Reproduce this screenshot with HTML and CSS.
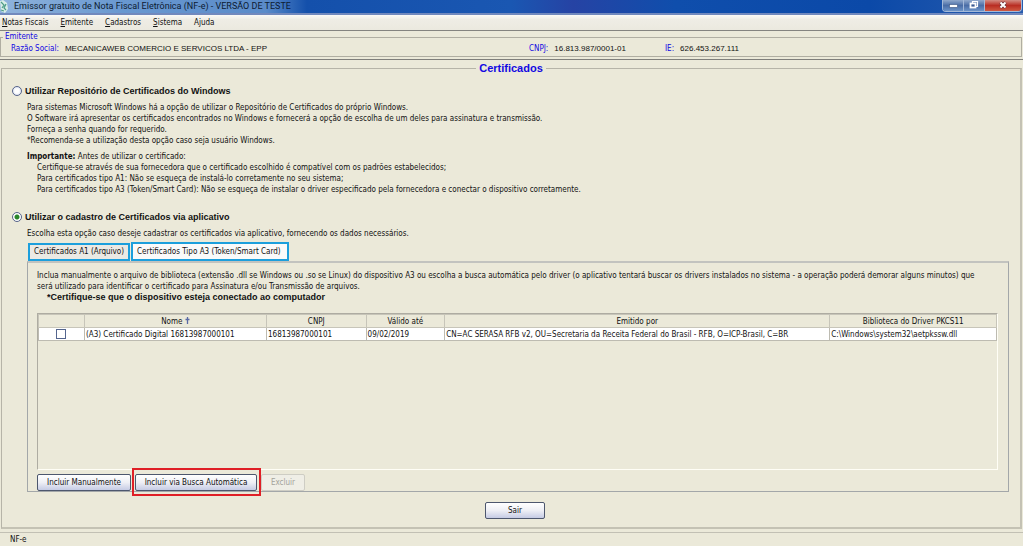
FILE: index.html
```html
<!DOCTYPE html>
<html lang="pt-BR">
<head>
<meta charset="utf-8">
<title>Emissor gratuito de Nota Fiscal Eletrônica (NF-e)</title>
<link rel="stylesheet" href="styles.css">
</head>
<body>
<header class="titlebar">
  <svg class="app-icon" viewBox="0 0 10 13" aria-hidden="true">
    <path d="M0 1l3-1 4 3 1 6-3 4-4-2z" fill="#d9eee8"/>
    <path d="M1 2l3 3-2 3M6 4L4 8l2 2M1 10l3 1" fill="none" stroke="#4d9c86" stroke-width="1.2"/>
  </svg>
  <span class="title">Emissor gratuito de Nota Fiscal Eletrônica (NF-e) - VERSÃO DE TESTE</span>
  <div class="window-buttons">
    <button class="win min" aria-label="Minimizar"><svg viewBox="0 0 20 10"><rect x="6.500" y="3.500" width="8" height="3" fill="#fff" stroke="#46608c" stroke-width=".7"/></svg></button>
    <button class="win max" aria-label="Restaurar"><svg viewBox="0 0 20 10"><path d="M8.500 2V.5h5v5H12" fill="none" stroke="#fff" stroke-width="1.200"/><rect x="6.500" y="2.500" width="5" height="4" fill="#3c5c94" stroke="#fff" stroke-width="1.800"/></svg></button>
    <button class="win close" aria-label="Fechar"><svg viewBox="0 0 36 10"><path d="M15.500 1.500l5 5M20.500 1.500l-5 5" stroke="#673038" stroke-width="3.400"/><path d="M15.500 1.500l5 5M20.500 1.500l-5 5" stroke="#fff" stroke-width="2"/></svg></button>
  </div>
</header>
<nav class="menubar">
  <button><u>N</u>otas Fiscais</button>
  <button><u>E</u>mitente</button>
  <button><u>C</u>adastros</button>
  <button><u>S</u>istema</button>
  <button>A<u>j</u>uda</button>
</nav>
<section class="issuer-bar">
  <fieldset class="issuer">
    <legend>Emitente</legend>
    <dl>
      <div class="company"><dt>Razão Social:</dt><dd>MECANICAWEB COMERCIO E SERVICOS LTDA - EPP</dd></div>
      <div class="cnpj"><dt>CNPJ:</dt><dd>16.813.987/0001-01</dd></div>
      <div class="ie"><dt>IE:</dt><dd>626.453.267.111</dd></div>
    </dl>
  </fieldset>
</section>
<main class="content">
  <fieldset class="certificates">
    <legend>Certificados</legend>
    <div class="option">
      <input type="radio" name="modo" id="repo"><label for="repo">Utilizar Repositório de Certificados do Windows</label>
    </div>
    <div class="help">
      <p>Para sistemas Microsoft Windows há a opção de utilizar o Repositório de Certificados do próprio Windows.<br>
      O Software irá apresentar os certificados encontrados no Windows e fornecerá a opção de escolha de um deles para assinatura e transmissão.<br>
      Forneça a senha quando for requerido.<br>
      *Recomenda-se a utilização desta opção caso seja usuário Windows.</p>
      <p><b>Importante:</b> Antes de utilizar o certificado:</p>
      <ul>
        <li>Certifique-se através de sua fornecedora que o certificado escolhido é compatível com os padrões estabelecidos;</li>
        <li>Para certificados tipo A1: Não se esqueça de instalá-lo corretamente no seu sistema;</li>
        <li>Para certificados tipo A3 (Token/Smart Card): Não se esqueça de instalar o driver especificado pela fornecedora e conectar o dispositivo corretamente.</li>
      </ul>
    </div>
    <div class="option">
      <input type="radio" name="modo" id="app" checked><label for="app">Utilizar o cadastro de Certificados via aplicativo</label>
    </div>
    <p class="app-help">Escolha esta opção caso deseje cadastrar os certificados via aplicativo, fornecendo os dados necessários.</p>
    <div class="tabs" role="tablist">
      <button class="tab" role="tab" aria-selected="false">Certificados A1 (Arquivo)</button>
      <button class="tab active" role="tab" aria-selected="true">Certificados Tipo A3 (Token/Smart Card)</button>
    </div>
    <section class="panel" role="tabpanel">
      <p class="intro">Inclua manualmente o arquivo de biblioteca (extensão .dll se Windows ou .so se Linux) do dispositivo A3 ou escolha a busca automática pelo driver (o aplicativo tentará buscar os drivers instalados no sistema - a operação poderá demorar alguns minutos) que<br>será utilizado para identificar o certificado para Assinatura e/ou Transmissão de arquivos.</p>
      <p class="notice">*Certifique-se que o dispositivo esteja conectado ao computador</p>
      <div class="table-box">
        <table>
          <colgroup><col class="c-check"><col class="c-name"><col class="c-cnpj"><col class="c-valid"><col class="c-issuer"><col class="c-lib"></colgroup>
          <thead><tr><th></th><th>Nome <svg class="sort" viewBox="0 0 5 7" aria-hidden="true"><path d="M2.500 0v7M.5 2.500h4" stroke="#5969a5" stroke-width="1.300"/></svg></th><th>CNPJ</th><th>Válido até</th><th>Emitido por</th><th>Biblioteca do Driver PKCS11</th></tr></thead>
          <tbody><tr><td class="check"><input type="checkbox" aria-label="Selecionar certificado"></td><td>(A3) Certificado Digital 16813987000101</td><td>16813987000101</td><td>09/02/2019</td><td>CN=AC SERASA RFB v2, OU=Secretaria da Receita Federal do Brasil - RFB, O=ICP-Brasil, C=BR</td><td>C:\Windows\system32\aetpkssw.dll</td></tr></tbody>
        </table>
      </div>
      <div class="actions">
        <button class="btn manual">Incluir Manualmente</button>
        <div class="marked"><button class="btn auto">Incluir via Busca Automática</button></div>
        <button class="btn remove" disabled>Excluir</button>
      </div>
    </section>
    <div class="exit"><button class="btn">Sair</button></div>
  </fieldset>
</main>
<footer class="status">NF-e</footer>
</body>
</html>
```
FILE: styles.css
```css
* { box-sizing: border-box; }
body {
  margin: 0;
  min-height: 100vh;
  display: flex;
  flex-direction: column;
  background: #ebe9d9;
  color: #111;
  font: 8px/11px "DejaVu Sans Condensed", "Liberation Sans", sans-serif;
}
button { font: inherit; color: inherit; margin: 0; padding: 0; border: 0; background: none; white-space: nowrap; }
p, dl, dd, ul { margin: 0; padding: 0; }
fieldset { min-width: 0; margin: 0; padding: 0; }

.titlebar {
  display: flex;
  height: 15px;
  border-bottom: 2px solid #7189bd;
  background: linear-gradient(90deg, #8fb3dc 0, #6998d0 12%, #5a8bc9 26%, #1450ab 30%, #1a57b2 50%, #2643a4 56%, #0f4eac 66%, #0b49a8 85%, #285cae 100%);
}
.app-icon { width: 10px; height: 13px; margin-right: 4px; }
.title { flex: 1; font: 9px/13px Roboto, sans-serif; color: #0d1b32; white-space: nowrap; }
.window-buttons { display: flex; height: 12px; margin-right: 1px; border: 1px solid #a4b9d8; border-top: 0; border-radius: 0 0 4px 4px; overflow: hidden; }
.win { height: 11px; background: linear-gradient(#91a9cc, #4a6da6 50%, #6d94c8); border-right: 1px solid #a4b9d8; }
.win svg { display: block; width: 100%; height: 10px; }
.min, .max { width: 21px; }
.close { width: 36px; border: 0; background: linear-gradient(#d38c82, #b92e23 50%, #cf5a42); }

.menubar {
  display: flex;
  gap: 12px;
  height: 16px;
  padding-left: 2px;
  border-bottom: 1px solid #848480;
  background: linear-gradient(#fafaf7, #efede5 30%, #ebe9df);
}
u { text-underline-offset: 1px; }

.issuer-bar { padding: 1px 1px 2px 0; border-bottom: 1px solid #7f7f7b; }
.issuer { height: 25px; border: 1px solid #b0aea2; }
.issuer legend { margin-left: 2px; padding: 0 2px; line-height: 10px; color: #1208e2; }
.issuer dl { display: grid; grid-template-columns: 518fr 136fr 348fr; padding: 2px 8px 0 10px; }
.issuer dl div { display: flex; gap: 6px; line-height: 10px; }
dt { color: #1208e2; }
dd { font-family: "Liberation Sans", Arial, sans-serif; }

.content { flex: 1; display: flex; padding: 2px 1px 3px; }
.certificates { flex: 1; border: 1px solid #b6b4a8; border-right: 2px solid #c4c2b4; border-bottom: 2px solid #c4c2b4; }
.certificates > legend, .option, .notice { font-family: "Liberation Sans", Arial, sans-serif; font-weight: bold; }
.certificates > legend { margin: 0 auto; padding: 0 3px; font-size: 11px; line-height: 12px; color: #1208e2; }
.option { display: flex; align-items: center; gap: 3px; margin: 11px 0 0 10px; height: 12px; }
.option label { font-size: 9px; line-height: 12px; }
.option input { appearance: none; width: 10px; height: 10px; margin: 0; border: 1px solid #56638a; border-radius: 50%; background: radial-gradient(#fff 35%, #cbd5eb); }
.option input:checked { background: radial-gradient(#29862b 0 2px, #fff 3px); }
.help { padding: 5px 0 5px 25px; }
.help p + p { margin-top: 5px; }
.help ul { padding-left: 10px; list-style: none; }
.app-help { margin: 5px 0 3px 25px; }

.tabs { display: flex; align-items: flex-end; gap: 1px; margin-left: 26px; }
.tab { height: 18px; padding: 0 4px; border: 2px solid #1c9fdc; background: #ebe9e4; line-height: 14px; }
.tab.active { height: 19px; padding: 0 6px 0 4px; background: #fafafa; }
.panel { margin: 0 11px 0 25px; padding: 7px 10px 0 9px; border: 1px solid #a3a7a9; border-top: 2px solid #c2c3bf; }
.notice { padding-left: 10px; font-size: 9px; }
.table-box { height: 157px; margin-top: 10px; border: 1px solid #aeaca2; border-right-color: #fffef6; border-bottom-color: #fffef6; }
table { width: 100%; border-collapse: collapse; table-layout: fixed; }
.c-check { width: 4.8%; }
.c-name { width: 19%; }
.c-cnpj { width: 10.4%; }
.c-valid { width: 8.2%; }
.c-issuer { width: 40.2%; }
.c-lib { width: 17.4%; }
th, td { height: 13px; padding: 0 1px; white-space: nowrap; border: 1px solid #bdbbb1; }
th { font-weight: normal; height: 13px; border-color: #c7c5b9; }
td { background: #fff; }
.sort { width: 5px; height: 7px; }
.check { text-align: center; }
.check input { display: block; appearance: none; width: 10px; height: 10px; margin: 0 auto; border: 1px solid #54658e; background: #fff; }

.actions { display: flex; gap: 4px; margin-top: 4px; }
.btn { height: 17px; padding: 0; border: 1px solid #4d576e; border-radius: 2px; background: linear-gradient(#fff, #eeeff5 50%, #c5cbe4); line-height: 14px; }
.manual { width: 94px; }
.auto { width: 122px; }
.remove { width: 44px; border-color: #cecdc4; background: #efeee6; color: #a3a29a; }
.marked { position: relative; }
.marked::after { content: ""; position: absolute; inset: -6px -4px -5px -3px; border: 2px solid #df1f26; pointer-events: none; }
.exit { display: flex; justify-content: center; margin: 10px 0 8px; padding-left: 8px; }
.exit .btn { width: 60px; }
.status { height: 14px; padding-left: 10px; border-top: 1px solid #c2c0b4; line-height: 14px; }
```
